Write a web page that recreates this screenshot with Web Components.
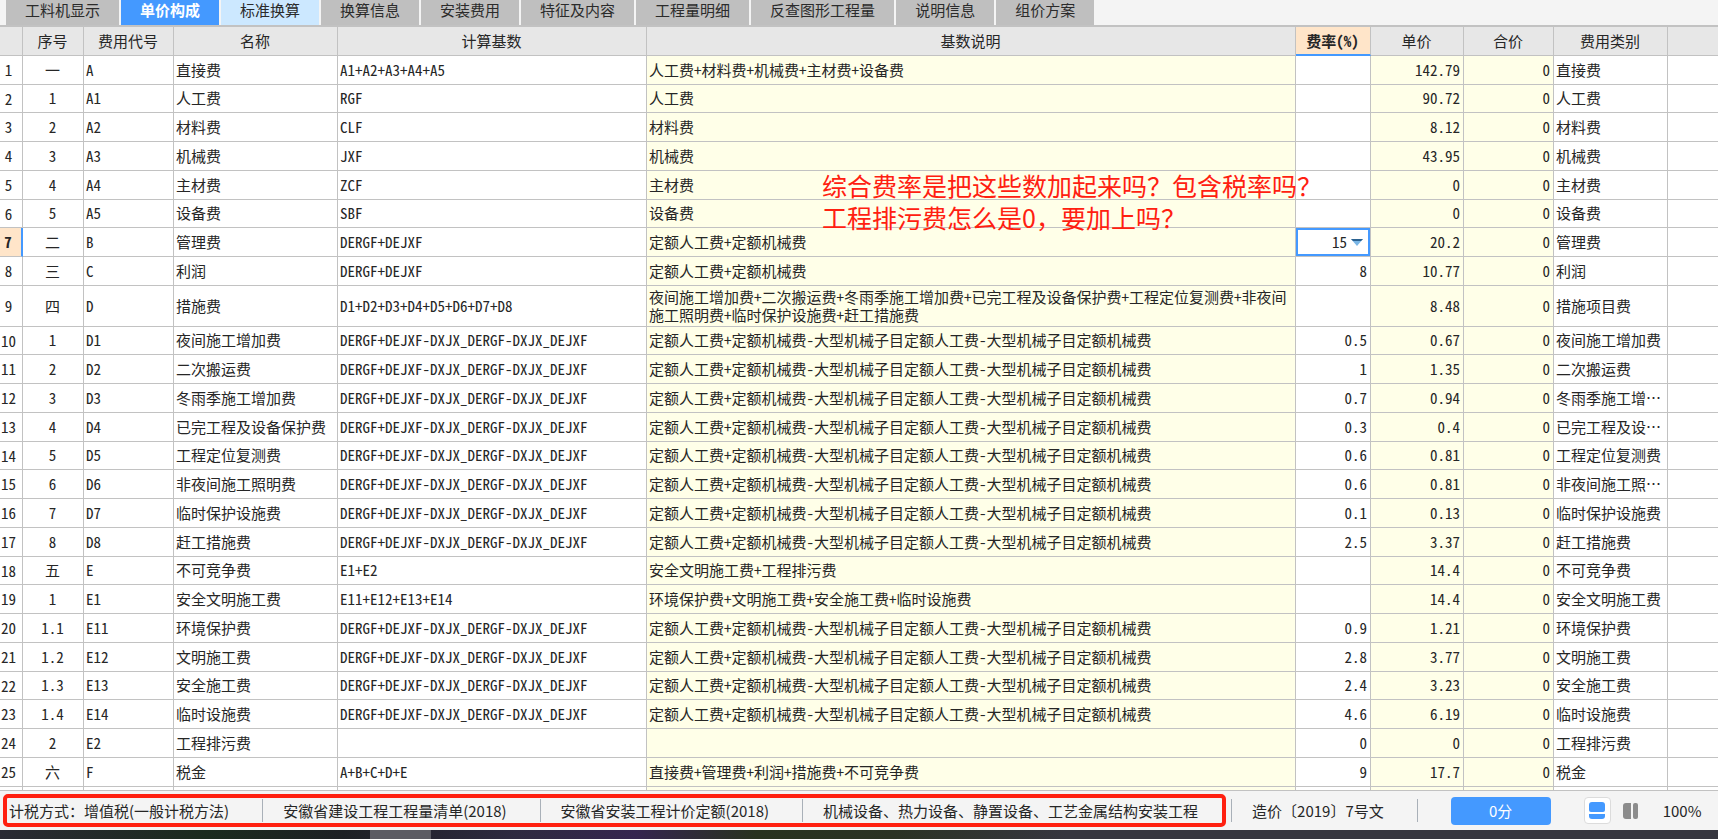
<!DOCTYPE html>
<html lang="zh-CN">
<head>
<meta charset="utf-8">
<title>单价构成</title>
<style>
  html { background: #f4f4f4; }
  body { margin: 0; font: 15px/18px "Noto Sans CJK SC", sans-serif; color: #262626; }
</style>
</head>
<body>
<pricing-page></pricing-page>

<template id="page-template">
  <style>
    :host { display: flex; flex-direction: column; min-height: 100vh; }
    main { position: relative; }
    user-note { position: absolute; top: 142px; left: 822px; }
  </style>
  <nav-tabs>
    <nav-tab>工料机显示</nav-tab>
    <nav-tab state="active">单价构成</nav-tab>
    <nav-tab state="hover">标准换算</nav-tab>
    <nav-tab>换算信息</nav-tab>
    <nav-tab>安装费用</nav-tab>
    <nav-tab>特征及内容</nav-tab>
    <nav-tab>工程量明细</nav-tab>
    <nav-tab>反查图形工程量</nav-tab>
    <nav-tab>说明信息</nav-tab>
    <nav-tab>组价方案</nav-tab>
  </nav-tabs>
  <main>
    <fee-grid></fee-grid>
    <user-note><div>综合费率是把这些数加起来吗？包含税率吗？</div><div>工程排污费怎么是0，要加上吗？</div></user-note>
  </main>
  <status-bar>
    <status-item slot="marked">计税方式：增值税(一般计税方法)</status-item>
    <status-item slot="marked">安徽省建设工程工程量清单(2018)</status-item>
    <status-item slot="marked">安徽省安装工程计价定额(2018)</status-item>
    <status-item slot="marked" last>机械设备、热力设备、静置设备、工艺金属结构安装工程</status-item>
    <status-item>造价〔2019〕7号文</status-item>
  </status-bar>
  <task-strip></task-strip>
</template>

<template id="tabs-template">
  <style>
    :host { display: flex; gap: 2px; padding-left: 6px; background: #f4f4f4; border-bottom: 2px solid #c2c2c2; }
  </style>
  <slot></slot>
</template>

<template id="tab-template">
  <style>
    :host { display: block; }
    button { display: block; border: 0; margin: 0; height: 25px; padding: 0 19px 5px; font: inherit; line-height: 20px; color: #2b2b2b; background: #bfbfbf; white-space: nowrap; }
    :host([state="active"]) button { background: #4499ff; color: #fff; font-weight: bold; }
    :host([state="hover"]) button { background: #cce8ff; }
  </style>
  <button type="button"><slot></slot></button>
</template>

<template id="grid-template">
  <style>
    :host { display: block; background: #fff; }
    table { width: 100%; table-layout: fixed; border-collapse: separate; border-spacing: 0; }
    th, td { box-sizing: border-box; padding: 0 3px 0 2px; border: 0 solid #c2c2c2; border-width: 0 1px 1px 0; font-weight: normal; text-align: left; white-space: nowrap; overflow: hidden; }
    th:last-child, td:last-child { border-right: 0; }
    thead th { height: 29px; background: #e7e7e7; text-align: center; }
    thead th.current { background: #ffe5c9; border-bottom: 2px solid #4499ff; font-weight: bold; }
    tbody, thead .current { font-feature-settings: "hwid"; }
    tbody tr { height: 29px; }
    tbody tr:nth-child(4n+2) { height: 28px; }
    tbody tr.tall { height: 41px; }
    tbody td { padding-bottom: 1px; }
    tbody tr.tall td { white-space: normal; }
    tbody tr.rest { height: 4px; }
    tbody th { padding: 0 5px 0 0; text-align: center; }
    tbody th.current { background: #ffe5c9; border-right: 2px solid #4499ff; font-weight: bold; }
    .center { text-align: center; }
    .num { text-align: right; }
    .calc { background: #ffffe8; }
    .full { font-feature-settings: normal; }
    td.edit { padding: 0; }
    .combo { display: flex; align-items: center; box-sizing: border-box; height: 28px; padding-right: 5px; border: 2px solid #4499ff; }
    select { flex: 1; min-width: 0; appearance: none; border: 0; margin: 0; padding: 0 4px 0 0; background: transparent; font: inherit; font-feature-settings: inherit; color: inherit; text-align: right; text-align-last: right; outline: 0; }
    .combo svg { flex: none; display: block; }
  </style>
  <table>
    <colgroup>
      <col style="width:23px"><col style="width:61px"><col style="width:90px"><col style="width:164px"><col style="width:309px"><col><col style="width:75px"><col style="width:93px"><col style="width:90px"><col style="width:114px"><col style="width:50px">
    </colgroup>
    <thead>
      <tr><th></th><th scope="col">序号</th><th scope="col">费用代号</th><th scope="col">名称</th><th scope="col">计算基数</th><th scope="col">基数说明</th><th scope="col" class="current">费率(%)</th><th scope="col">单价</th><th scope="col">合价</th><th scope="col">费用类别</th><th></th></tr>
    </thead>
    <tbody></tbody>
  </table>
</template>

<template id="note-template">
  <style>
    :host { display: block; font-size: 25px; line-height: 32px; color: #ff2010; white-space: nowrap; pointer-events: none; }
  </style>
  <slot></slot>
</template>

<template id="status-template">
  <style>
    :host { display: flex; align-items: center; height: 39px; background: #f4f4f4; white-space: nowrap; }
    .marked { display: flex; box-sizing: border-box; height: 33px; align-items: center; margin-left: 3px; padding-right: 4px; border: 4px solid #ff2010; border-radius: 5px; }
    .plain { display: flex; margin-left: 5px; border-left: 1px solid #a9b0b8; }
    .score { width: 100px; height: 28px; margin: 0 0 0 33px; padding: 0; border: 0; border-radius: 4px; background: #4499ff; color: #fff; font: inherit; }
    .view { display: block; width: 27px; height: 27px; margin: 0; padding: 0; border: 0; background: none; }
    .view svg { display: block; margin: auto; }
    .view.on { margin-left: 33px; margin-right: 7px; background: #fff; border: 1px solid #dcdcdc; border-radius: 4px; }
    output { margin-left: 18px; }
  </style>
  <div class="marked"><slot name="marked"></slot></div>
  <div class="plain"><slot></slot></div>
  <button class="score" type="button">0分</button>
  <button class="view on" type="button" aria-label="上下布局"><svg width="16" height="18" viewBox="0 0 16 18"><path d="M3 0H13Q16 0 16 3V8Q16 10 14 10H2Q0 10 0 8V3Q0 0 3 0Z" fill="#4499ff"/><path d="M0 12H16V14Q16 17 13 17H3Q0 17 0 14Z" fill="#4499ff"/></svg></button>
  <button class="view" type="button" aria-label="左右布局"><svg width="16" height="18" viewBox="0 0 16 18"><path d="M3 1H8V17H3Q0 17 0 14V4Q0 1 3 1Z" fill="#8c8c8c"/><rect x="10" y="1" width="5" height="16" rx="2" fill="#8c8c8c"/></svg></button>
  <output>100%</output>
</template>

<template id="item-template">
  <style>
    :host { display: block; padding: 0 33px 0 20px; border-right: 1px solid #a9b0b8; line-height: 23px; }
    :host(:first-of-type) { padding-left: 2px; }
    :host([last]) { padding-right: 20px; border-right: 0; }
  </style>
  <slot></slot>
</template>

<template id="strip-template">
  <style>
    :host { flex: 1; display: flex; min-height: 9px; background: linear-gradient(90deg, #2a2a33, #1b2b1e 12%, #1d2024 20%, #2e2a40 30%, #35254f 37%, #28331f 44%, #2b3324 52%, #36363f 62%, #36363f); }
    i { width: 61px; margin-left: 370px; background: #5b5b63; }
  </style>
  <i></i>
</template>

<script>
  const define = (name, templateId, setup) => {
    customElements.define(name, class extends HTMLElement {
      constructor() {
        super();
        this.attachShadow({ mode: 'open' })
          .append(document.getElementById(templateId).content.cloneNode(true));
        if (setup) setup(this.shadowRoot);
      }
    });
  };

  const BASE = 'DERGF+DEJXF-DXJX_DERGF-DXJX_DEJXF';
  const NOTE = '定额人工费+定额机械费-大型机械子目定额人工费-大型机械子目定额机械费';
  // 序号, 费用代号, 名称, 计算基数, 基数说明, 费率, 单价, 合价, 费用类别
  const ROWS = [
    ['一','A','直接费','A1+A2+A3+A4+A5','人工费+材料费+机械费+主材费+设备费','','142.79','0','直接费'],
    ['1','A1','人工费','RGF','人工费','','90.72','0','人工费'],
    ['2','A2','材料费','CLF','材料费','','8.12','0','材料费'],
    ['3','A3','机械费','JXF','机械费','','43.95','0','机械费'],
    ['4','A4','主材费','ZCF','主材费','','0','0','主材费'],
    ['5','A5','设备费','SBF','设备费','','0','0','设备费'],
    ['二','B','管理费','DERGF+DEJXF','定额人工费+定额机械费','15','20.2','0','管理费'],
    ['三','C','利润','DERGF+DEJXF','定额人工费+定额机械费','8','10.77','0','利润'],
    ['四','D','措施费','D1+D2+D3+D4+D5+D6+D7+D8','夜间施工增加费+二次搬运费+冬雨季施工增加费+已完工程及设备保护费+工程定位复测费+非夜间施工照明费+临时保护设施费+赶工措施费','','8.48','0','措施项目费'],
    ['1','D1','夜间施工增加费',BASE,NOTE,'0.5','0.67','0','夜间施工增加费'],
    ['2','D2','二次搬运费',BASE,NOTE,'1','1.35','0','二次搬运费'],
    ['3','D3','冬雨季施工增加费',BASE,NOTE,'0.7','0.94','0','冬雨季施工增…'],
    ['4','D4','已完工程及设备保护费',BASE,NOTE,'0.3','0.4','0','已完工程及设…'],
    ['5','D5','工程定位复测费',BASE,NOTE,'0.6','0.81','0','工程定位复测费'],
    ['6','D6','非夜间施工照明费',BASE,NOTE,'0.6','0.81','0','非夜间施工照…'],
    ['7','D7','临时保护设施费',BASE,NOTE,'0.1','0.13','0','临时保护设施费'],
    ['8','D8','赶工措施费',BASE,NOTE,'2.5','3.37','0','赶工措施费'],
    ['五','E','不可竞争费','E1+E2','安全文明施工费+工程排污费','','14.4','0','不可竞争费'],
    ['1','E1','安全文明施工费','E11+E12+E13+E14','环境保护费+文明施工费+安全施工费+临时设施费','','14.4','0','安全文明施工费'],
    ['1.1','E11','环境保护费',BASE,NOTE,'0.9','1.21','0','环境保护费'],
    ['1.2','E12','文明施工费',BASE,NOTE,'2.8','3.77','0','文明施工费'],
    ['1.3','E13','安全施工费',BASE,NOTE,'2.4','3.23','0','安全施工费'],
    ['1.4','E14','临时设施费',BASE,NOTE,'4.6','6.19','0','临时设施费'],
    ['2','E2','工程排污费','','','0','0','0','工程排污费'],
    ['六','F','税金','A+B+C+D+E','直接费+管理费+利润+措施费+不可竞争费','9','17.7','0','税金'],
  ];
  const CLASSES = ['center', '', '', '', 'calc', 'num', 'num calc', 'num calc', 'full', ''];
  const CURRENT = 6;
  const combo = value => `<div class="combo"><select aria-label="费率"><option>${value}</option></select>` +
    '<svg width="12" height="8" viewBox="0 0 12 8"><path d="M0 1H12L6 8Z" fill="#7ab6e6"/><path d="M0 1H12L10 3H2Z" fill="#2c6290"/></svg></div>';

  define('nav-tabs', 'tabs-template');
  define('nav-tab', 'tab-template');
  define('fee-grid', 'grid-template', root => {
    const rows = ROWS.map((row, r) => {
      const cells = CLASSES.map((cls, c) => r === CURRENT && c === 5
        ? `<td class="edit">${combo(row[c])}</td>`
        : `<td class="${cls}">${row[c] || ''}</td>`).join('');
      return `<tr class="${row[4].length > 50 ? 'tall' : ''}"><th scope="row" class="${r === CURRENT ? 'current' : ''}">${r + 1}</th>${cells}</tr>`;
    });
    rows.push(`<tr class="rest"><td></td>${CLASSES.map(cls => `<td class="${cls}"></td>`).join('')}</tr>`);
    root.querySelector('tbody').innerHTML = rows.join('');
  });
  define('user-note', 'note-template');
  define('status-item', 'item-template');
  define('status-bar', 'status-template');
  define('task-strip', 'strip-template');
  define('pricing-page', 'page-template');
</script>
</body>
</html>
